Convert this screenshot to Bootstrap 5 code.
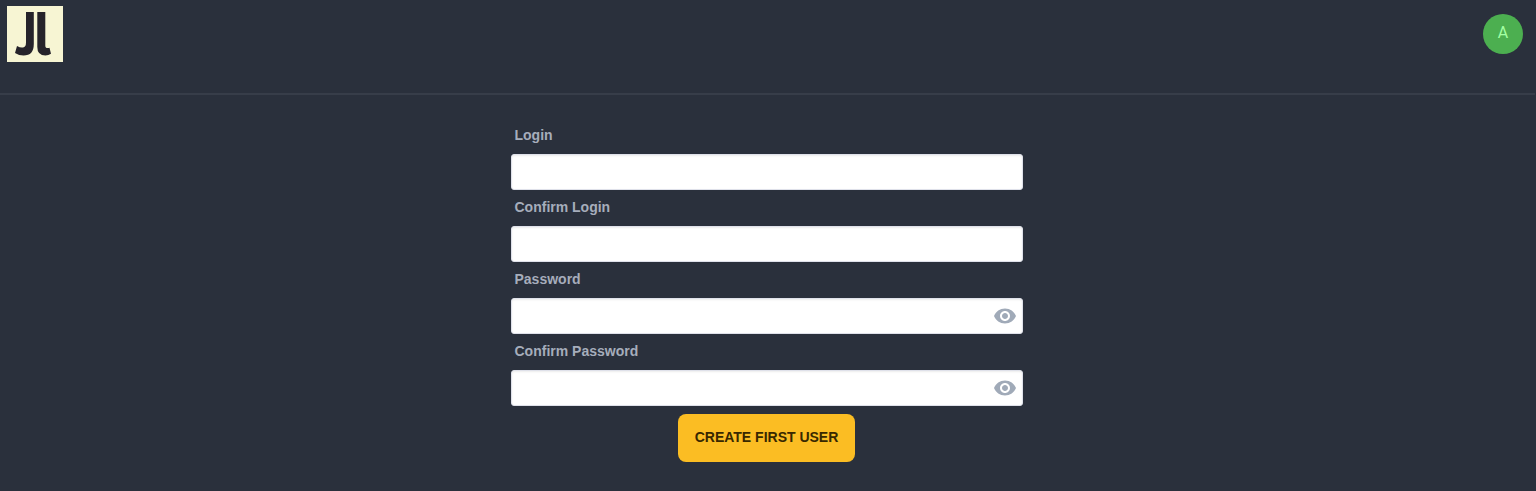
<!DOCTYPE html>
<html lang="en">
<head>
<meta charset="utf-8">
<meta name="viewport" content="width=device-width, initial-scale=1">
<title>Create first user</title>
<link href="https://cdn.jsdelivr.net/npm/bootstrap@5.3.0/dist/css/bootstrap.min.css" rel="stylesheet">
<style>
body{background:#2a303c;color:#a6adbb;font-family:"Liberation Sans",Arial,sans-serif;font-size:14px;line-height:20px;min-height:100vh;overflow:hidden}
.site-head{height:68px;padding:6px 13px 0 7px}
.avatar{width:40px;height:40px;margin-top:8px;background:#4caf50;color:#a3ffa3;font:16px/37px Roboto,sans-serif}
.rule{height:2px;margin:25px 1px 0 0;background:#373d49}
.signup{width:512px;margin:23px 0 0 511px}
.signup .form-label{height:36px;margin:0;padding:7px 3.5px 9px;font-weight:700}
.signup .form-control{height:36px;background:#fff;border:1px solid #dfe1ea;border-radius:3px;box-shadow:inset 0 1px 2px rgba(0,0,0,.08)}
.peek{right:6.500px;top:6px;width:24px;height:24px;color:#a0aab8}
.btn-create{width:177px;height:48px;margin:8px 1px 0 0;background:#fbbd23;color:#382800;border:0;border-radius:8px;font-size:14px;font-weight:700;line-height:14px;padding:0 0 3px}
.btn-create:hover{background:#e5a900;color:#382800}
</style>
</head>
<body>
<header class="site-head d-flex justify-content-between align-items-start">
  <svg width="56" height="56" viewBox="0 0 56 56" role="img" aria-label="Logo">
    <rect width="56" height="56" fill="#f7f5d3"/>
    <path fill="#26232a" d="M19 6h7.800v32q0 11.500-10.300 11.500-4.500 0-8.500-2.500l2-7q3.500 2 6 1.500 3-.5 3-5zM30.300 6h8v33.500q0 3.500 4.200 2.300l1.500 6q-2.500 1.700-5.500 1.700-8.200 0-8.200-8.500z"/>
  </svg>
  <div class="avatar rounded-circle text-center">A</div>
</header>
<div class="rule"></div>
<main>
  <form class="signup d-flex flex-column">
    <label class="form-label" for="login">Login</label>
    <input class="form-control" id="login" type="text">
    <label class="form-label" for="login2">Confirm Login</label>
    <input class="form-control" id="login2" type="text">
    <label class="form-label" for="pass">Password</label>
    <div class="position-relative">
      <input class="form-control" id="pass" type="password">
      <svg class="peek position-absolute" viewBox="0 0 24 24" fill="currentColor"><path d="M12 4.500C7 4.500 2.730 7.610 1 12c1.730 4.390 6 7.500 11 7.500s9.270-3.110 11-7.500c-1.730-4.390-6-7.500-11-7.500zM12 17c-2.760 0-5-2.240-5-5s2.240-5 5-5 5 2.240 5 5-2.240 5-5 5zm0-8c-1.660 0-3 1.340-3 3s1.340 3 3 3 3-1.340 3-3-1.340-3-3-3z"/></svg>
    </div>
    <label class="form-label" for="pass2">Confirm Password</label>
    <div class="position-relative">
      <input class="form-control" id="pass2" type="password">
      <svg class="peek position-absolute" viewBox="0 0 24 24" fill="currentColor"><path d="M12 4.500C7 4.500 2.730 7.610 1 12c1.730 4.390 6 7.500 11 7.500s9.270-3.110 11-7.500c-1.730-4.390-6-7.500-11-7.500zM12 17c-2.760 0-5-2.240-5-5s2.240-5 5-5 5 2.240 5 5-2.240 5-5 5zm0-8c-1.660 0-3 1.340-3 3s1.340 3 3 3 3-1.340 3-3-1.340-3-3-3z"/></svg>
    </div>
    <button class="btn btn-create align-self-center text-uppercase" type="button">Create first user</button>
  </form>
</main>
<script src="https://cdn.jsdelivr.net/npm/bootstrap@5.3.0/dist/js/bootstrap.bundle.min.js"></script>
</body>
</html>
